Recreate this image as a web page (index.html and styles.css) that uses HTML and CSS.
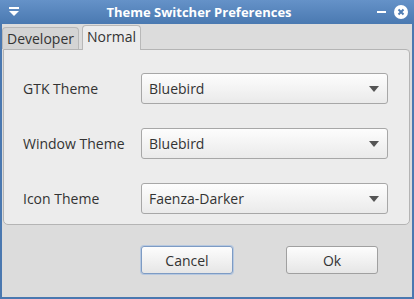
FILE: index.html
```html
<!DOCTYPE html>
<html lang="en">
<head>
    <meta charset="UTF-8">
    <title>Theme Switcher Preferences</title>
    <link rel="stylesheet" href="styles.css">
</head>
<body>
    <div class="window">
        <div class="titlebar">
            <span class="menu-btn">
                <svg width="12" height="10" viewBox="0 0 12 10"><rect x="1" y="0" width="10" height="2" fill="#fff"/><path d="M1 4 L11 4 L6 9 Z" fill="#fff"/></svg>
            </span>
            <span class="title">Theme Switcher Preferences</span>
            <span class="win-btns">
                <svg width="12" height="12" viewBox="0 0 12 12"><rect x="1" y="5" width="9" height="2" fill="#fff"/></svg>
                <svg width="14" height="14" viewBox="0 0 14 14"><circle cx="7" cy="7" r="7" fill="#fff"/><path d="M4.5 4.5 L9.5 9.5 M9.5 4.5 L4.5 9.5" stroke="#4f7db4" stroke-width="2"/></svg>
            </span>
        </div>
        <div class="body">
            <div class="tabs">
                <div class="tab">Developer</div>
                <div class="tab active">Normal</div>
            </div>
            <div class="panel">
                <div class="row">
                    <label>GTK Theme</label>
                    <div class="combo"><span>Bluebird</span><span class="arrow"></span></div>
                </div>
                <div class="row">
                    <label>Window Theme</label>
                    <div class="combo"><span>Bluebird</span><span class="arrow"></span></div>
                </div>
                <div class="row">
                    <label>Icon Theme</label>
                    <div class="combo"><span>Faenza-Darker</span><span class="arrow"></span></div>
                </div>
            </div>
            <div class="buttons">
                <button class="btn default">Cancel</button>
                <button class="btn">Ok</button>
            </div>
        </div>
    </div>
</body>
</html>
```

FILE: styles.css
```css
html, body { margin: 0; padding: 0; }
body { font-family: "Open Sans", "DejaVu Sans", sans-serif; font-size: 13px; color: #333; background: #dcdcdc; }
.window { width: 414px; height: 299px; box-sizing: border-box; border: 2px solid #4a78b0; border-top: none; display: flex; flex-direction: column; }
.titlebar { height: 24px; margin: 0 -2px; background: linear-gradient(#6592c8, #4a79b1); display: flex; align-items: center; padding: 0 6px 0 8px; color: #fff; }
.menu-btn { width: 14px; display: flex; }
.title { flex: 1; text-align: center; font-weight: bold; font-size: 13px; }
.win-btns { display: flex; align-items: center; gap: 6px; }
.body { flex: 1; display: flex; flex-direction: column; background: #dcdcdc; padding: 0 2px 0 0; }
.tabs { display: flex; align-items: flex-end; height: 25px; gap: 3px; }
.tab { height: 21px; padding: 0 4px; border: 1px solid #b8b8b8; border-bottom: none; border-radius: 4px 4px 0 0; background: #d4d4d4; line-height: 21px; font-size: 14px; }
.tab.active { height: 24px; line-height: 22px; background: #ececec; position: relative; top: 1px; }
.panel { height: 176px; box-sizing: border-box; margin: 0 0 0 1px; background: #ececec; border: 1px solid #b4b4b4; border-radius: 0 4px 5px 5px; padding: 23px 21px 0 19px; display: flex; flex-direction: column; gap: 24px; }
.row { display: flex; align-items: center; height: 31px; }
.row label { width: 118px; font-size: 14px; }
.combo { flex: 1; height: 31px; box-sizing: border-box; border: 1px solid #a7a7a7; border-radius: 3px; background: linear-gradient(#fdfdfd, #eaeaea); display: flex; align-items: center; justify-content: space-between; padding: 0 8px 0 7px; font-size: 14px; }
.arrow { width: 0; height: 0; border-left: 5px solid transparent; border-right: 5px solid transparent; border-top: 6px solid #555; }
.buttons { display: flex; padding: 21px 0 0 139px; gap: 53px; }
.btn { width: 92px; height: 28px; font-family: inherit; font-size: 14px; color: #333; border: 1px solid #a0a0a0; border-radius: 3px; background: linear-gradient(#fdfdfd, #e6e6e6); }
.btn.default { border-color: #7d9bc4; box-shadow: 0 0 0 1px #b6c8e0; }
```
